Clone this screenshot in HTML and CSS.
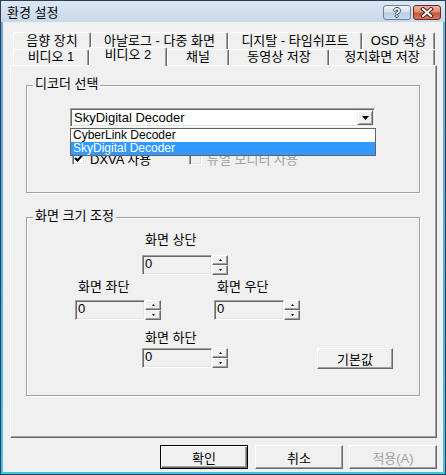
FILE: index.html
```html
<!DOCTYPE html>
<html lang="ko">
<head>
<meta charset="utf-8">
<title>환경 설정</title>
<link rel="stylesheet" href="styles.css">
</head>
<body>
<div class="window">
  <div class="titlebar">
    <span class="title">환경 설정</span>
    <div class="caption">
      <div class="cbtn help"><span>?</span></div>
      <div class="cbtn close">
        <svg width="14" height="11" viewBox="0 0 14 11"><path d="M3 2 L11 9 M11 2 L3 9" stroke="#5a1a12" stroke-width="4" stroke-linecap="square" fill="none"/><path d="M3 2 L11 9 M11 2 L3 9" stroke="#fff" stroke-width="2" stroke-linecap="square" fill="none"/></svg>
      </div>
    </div>
  </div>
  <div class="client">
    <div class="tabs">
      <div class="tabrow row1">
        <div class="tab t78">음향 장치</div>
        <div class="tab t137">아날로그 - 다중 화면</div>
        <div class="tab t134">디지탈 - 타임쉬프트</div>
        <div class="tab t73">OSD 색상</div>
      </div>
      <div class="tabrow row2">
        <div class="tab t76">비디오 1</div>
        <div class="tab t78 selected">비디오 2</div>
        <div class="tab t62">채널</div>
        <div class="tab t100">동영상 저장</div>
        <div class="tab t106">정지화면 저장</div>
      </div>
    </div>
    <div class="panel">
      <div class="group g1">
        <div class="group-title">디코더 선택</div>
        <div class="combo-wrap">
          <div class="combo">
            <span class="combo-text">SkyDigital Decoder</span>
            <span class="combo-btn"><svg width="7" height="4" viewBox="0 0 7 4"><polygon points="0,0 7,0 3.5,4" fill="#000"/></svg></span>
          </div>
          <div class="dropdown">
            <div class="item">CyberLink Decoder</div>
            <div class="item sel">SkyDigital Decoder</div>
          </div>
        </div>
        <div class="checks">
          <label class="check">
            <span class="box"><svg width="9" height="9" viewBox="0 0 9 9"><path d="M1 4 L3.5 6.5 L8 1.5" stroke="#000" stroke-width="2.2" fill="none"/></svg></span>
            <span>DXVA 사용</span>
          </label>
          <label class="check disabled">
            <span class="box"></span>
            <span>듀얼 모니터 사용</span>
          </label>
        </div>
      </div>
      <div class="group g2">
        <div class="group-title">화면 크기 조정</div>
        <div class="row r1">
          <div class="field">
            <div class="flabel">화면 상단</div>
            <div class="spin"><div class="edit">0</div><div class="spinbtns"><span class="sb"><svg width="3" height="2" viewBox="0 0 3 2"><polygon points="0,2 3,2 1.5,0" fill="#000"/></svg></span><span class="sb"><svg width="3" height="2" viewBox="0 0 3 2"><polygon points="0,0 3,0 1.5,2" fill="#000"/></svg></span></div></div>
          </div>
        </div>
        <div class="row r2">
          <div class="field">
            <div class="flabel">화면 좌단</div>
            <div class="spin"><div class="edit">0</div><div class="spinbtns"><span class="sb"><svg width="3" height="2" viewBox="0 0 3 2"><polygon points="0,2 3,2 1.5,0" fill="#000"/></svg></span><span class="sb"><svg width="3" height="2" viewBox="0 0 3 2"><polygon points="0,0 3,0 1.5,2" fill="#000"/></svg></span></div></div>
          </div>
          <div class="field right">
            <div class="flabel">화면 우단</div>
            <div class="spin"><div class="edit">0</div><div class="spinbtns"><span class="sb"><svg width="3" height="2" viewBox="0 0 3 2"><polygon points="0,2 3,2 1.5,0" fill="#000"/></svg></span><span class="sb"><svg width="3" height="2" viewBox="0 0 3 2"><polygon points="0,0 3,0 1.5,2" fill="#000"/></svg></span></div></div>
          </div>
        </div>
        <div class="row r3">
          <div class="field">
            <div class="flabel">화면 하단</div>
            <div class="spin"><div class="edit">0</div><div class="spinbtns"><span class="sb"><svg width="3" height="2" viewBox="0 0 3 2"><polygon points="0,2 3,2 1.5,0" fill="#000"/></svg></span><span class="sb"><svg width="3" height="2" viewBox="0 0 3 2"><polygon points="0,0 3,0 1.5,2" fill="#000"/></svg></span></div></div>
          </div>
          <div class="btn defaults">기본값</div>
        </div>
      </div>
    </div>
    <div class="buttons">
      <div class="btn dlg default">확인</div>
      <div class="btn dlg cancel">취소</div>
      <div class="btn dlg disabled">적용(A)</div>
    </div>
  </div>
</div>
</body>
</html>
```
FILE: styles.css
```css
* { box-sizing: border-box; }
html, body { margin: 0; padding: 0; }
body {
  width: 446px;
  height: 475px;
  overflow: hidden;
  background: #fff;
  font-family: "Liberation Sans", "Noto Sans CJK KR", sans-serif;
  font-size: 13px;
  color: #000;
}
.window {
  width: 446px;
  height: 475px;
  display: flex;
  flex-direction: column;
  border: 1px solid #2e3f52;
  padding: 0 2px 2px 2px;
  background: linear-gradient(to bottom, #6aa6d8 0%, #4fb2e6 60%, #3cc6f0 100%);
}
.titlebar {
  height: 21px;
  margin: 0 -2px;
  padding: 4px 4px 0 6px;
  display: flex;
  align-items: flex-start;
  justify-content: space-between;
  background: linear-gradient(to bottom, #dce7f4 0%, #c8d9ec 100%);
}
.title { line-height: 16px; font-size: 13px; }
.caption { display: flex; gap: 2px; }
.cbtn {
  width: 28px;
  height: 15px;
  border-radius: 3px;
  display: flex;
  align-items: center;
  justify-content: center;
}
.help {
  border: 1px solid #6c8098;
  background: linear-gradient(to bottom, #eef4fa 0%, #d3e0ee 48%, #b6cbe1 52%, #cddced 100%);
}
.help span {
  font-weight: bold;
  font-size: 12px;
  line-height: 12px;
  color: #fff;
  text-shadow: -1px 0 #2f4256, 1px 0 #2f4256, 0 -1px #2f4256, 0 1px #2f4256;
}
.close {
  border: 1px solid #6e2a20;
  background: linear-gradient(to bottom, #eeb4a6 0%, #dc8a76 48%, #c5563e 52%, #d8775c 100%);
}
.client {
  flex: 1;
  background: #f0f0f0;
  padding: 10px 6px 0 7px;
  display: flex;
  flex-direction: column;
}
.tabs { height: 33px; padding-left: 3px; display: flex; flex-direction: column; }
.tabrow { display: flex; align-items: flex-start; }
.row1 { height: 17px; }
.row2 { height: 16px; }
.tab {
  background: #f0f0f0;
  border-top: 1px solid #fff;
  border-left: 1px solid #fff;
  border-right: 1px solid #696969;
  box-shadow: inset -1px 0 0 #a0a0a0;
  border-radius: 2px 2px 0 0;
  text-align: center;
  white-space: nowrap;
}
.row1 .tab { height: 17px; line-height: 15px; }
.row2 .tab { height: 16px; line-height: 14px; }
.row2 .tab.selected {
  position: relative;
  z-index: 1;
  height: 19px;
  margin-top: -2px;
  line-height: 14px;
}
.t62 { width: 62px; }
.t73 { width: 73px; }
.t76 { width: 76px; }
.t78 { width: 78px; }
.t100 { width: 100px; }
.t106 { width: 106px; }
.t134 { width: 134px; }
.t137 { width: 137px; }
.panel {
  width: 427px;
  height: 373px;
  border-top: 1px solid #fff;
  border-left: 1px solid #fff;
  border-right: 1px solid #696969;
  border-bottom: 1px solid #696969;
  box-shadow: inset -1px -1px 0 #a0a0a0;
  padding: 19px 0 0 15px;
}
.group {
  width: 394px;
  border: 1px solid #a0a0a0;
  box-shadow: inset 1px 1px 0 #fff, 1px 1px 0 #fff;
}
.g1 { height: 108px; }
.g2 { height: 179px; margin-top: 24px; }
.group-title {
  width: max-content;
  margin: -9px 0 0 6px;
  padding: 0 2px;
  line-height: 14px;
  background: #f0f0f0;
}
.combo-wrap { position: relative; margin: 17px 0 0 43px; width: 305px; }
.combo {
  height: 19px;
  display: flex;
  background: #fff;
  border: 1px solid;
  border-color: #a0a0a0 #fff #fff #a0a0a0;
  box-shadow: inset 1px 1px 0 #696969, inset -1px -1px 0 #e3e3e3;
  padding: 1px;
}
.combo-text { flex: 1; padding-left: 2px; line-height: 15px; }
.combo-btn {
  width: 16px;
  height: 15px;
  background: #f0f0f0;
  border: 1px solid;
  border-color: #f0f0f0 #696969 #696969 #f0f0f0;
  box-shadow: inset 1px 1px 0 #fff, inset -1px -1px 0 #a0a0a0;
  display: flex;
  align-items: center;
  justify-content: center;
}
.dropdown {
  position: absolute;
  z-index: 2;
  top: 20px;
  left: 0;
  width: 306px;
  background: #fff;
  border: 1px solid #646464;
}
.item { height: 13px; line-height: 13px; font-size: 12px; padding-left: 2px; overflow: hidden; }
.item.sel { background: #3399ff; color: #fff; }
.checks { display: flex; margin: 24px 0 0 45px; }
.check { display: flex; align-items: center; gap: 5px; height: 14px; }
.check:first-child { width: 117px; }
.box {
  width: 13px;
  height: 13px;
  background: #fff;
  border: 1px solid;
  border-color: #a0a0a0 #fff #fff #a0a0a0;
  box-shadow: inset 1px 1px 0 #696969, inset -1px -1px 0 #e3e3e3;
  display: flex;
  align-items: center;
  justify-content: center;
}
.check.disabled { color: #a0a0a0; }
.check.disabled .box { background: #f0f0f0; }
.row { display: flex; }
.r1 { margin: 10px 0 0 115px; }
.r2 { margin: 5px 0 0 48px; }
.r3 { margin: 11px 0 0 115px; align-items: flex-end; }
.field.right { margin-left: 53px; }
.flabel { line-height: 14px; padding-left: 3px; }
.r1 .spin { margin-top: 8px; }
.r2 .spin { margin-top: 6px; }
.r3 .spin { margin-top: 3px; }
.spin { display: flex; width: 86px; height: 20px; }
.edit {
  width: 70px;
  height: 20px;
  background: #f0f0f0;
  border: 1px solid;
  border-color: #a0a0a0 #fff #fff #a0a0a0;
  box-shadow: inset 1px 1px 0 #696969, inset -1px -1px 0 #e3e3e3;
  padding: 1px 0 0 2px;
  line-height: 13px;
}
.spinbtns { display: flex; flex-direction: column; width: 16px; }
.sb {
  height: 10px;
  background: #f0f0f0;
  border: 1px solid;
  border-color: #fff #696969 #696969 #fff;
  box-shadow: inset -1px -1px 0 #a0a0a0;
  display: flex;
  align-items: center;
  justify-content: center;
}
.btn {
  background: #f0f0f0;
  border: 1px solid;
  border-color: #fff #696969 #696969 #fff;
  box-shadow: inset -1px -1px 0 #a0a0a0, inset 1px 1px 0 #f0f0f0;
  display: flex;
  align-items: center;
  justify-content: center;
}
.defaults { width: 76px; height: 21px; margin: 0 0 -1px 89px; }
.buttons { display: flex; justify-content: flex-end; margin-top: 7px; }
.dlg { width: 88px; height: 24px; }
.cancel { margin-left: 7px; }
.disabled.dlg { margin-left: 6px; color: #a0a0a0; }
.default {
  border-color: #000;
  box-shadow: inset 1px 1px 0 #fff, inset -1px -1px 0 #696969, inset -2px -2px 0 #a0a0a0;
}
```
